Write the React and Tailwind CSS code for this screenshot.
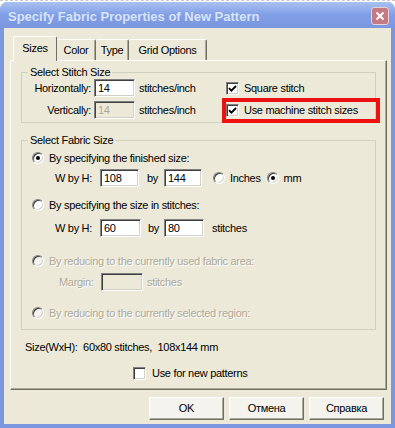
import React from "react";

const Check = ({ checked }) => (
  <span className="flex h-[13px] w-[13px] shrink-0 items-center justify-center border border-t-[#808080] border-l-[#808080] border-b-white border-r-white bg-white shadow-[inset_1px_1px_0_#404040,inset_-1px_-1px_0_#D4D0C8]">
    {checked && (
      <svg width="9" height="9" viewBox="0 0 9 9">
        <path d="M1 4.2 L3.4 6.6 L8 2" fill="none" stroke="#000" strokeWidth="1.9" />
      </svg>
    )}
  </span>
);

const Radio = ({ checked, disabled }) => (
  <span
    className={`flex h-[12px] w-[12px] shrink-0 items-center justify-center rounded-full border border-t-[#808080] border-l-[#808080] border-b-white border-r-white shadow-[inset_1px_1px_0_#404040,inset_-1px_-1px_0_#D4D0C8] ${
      disabled ? "bg-[#F4F3EE]" : "bg-white"
    }`}
  >
    {checked && <span className="h-[4px] w-[4px] rounded-full bg-black" />}
  </span>
);

const Field = ({ value, w, disabled }) => (
  <span
    className={`flex h-[18px] shrink-0 items-center border border-t-[#808080] border-l-[#808080] border-b-white border-r-white pl-[3px] shadow-[inset_1px_1px_0_#404040,inset_-1px_-1px_0_#D4D0C8] ${w} ${
      disabled ? "bg-[#ECE9D8] text-[#ACA899]" : "bg-white"
    }`}
  >
    {value}
  </span>
);

const dim = "text-[#ACA899] [text-shadow:1px_1px_0_#fff]";

const Tab = ({ label, active, w }) =>
  active ? (
    <div
      className={`relative z-10 -mb-px flex h-[25px] items-center justify-center rounded-t-[2px] border-l border-t border-r border-l-white border-t-white border-r-[#716F64] bg-[#ECE9D8] pb-[2px] ${w}`}
    >
      {label}
    </div>
  ) : (
    <div
      className={`flex h-[21px] items-center justify-center rounded-t-[2px] border-t border-r border-t-white border-r-[#716F64] shadow-[inset_-1px_0_0_#ACA899] ${w}`}
    >
      {label}
    </div>
  );

const Button = ({ children }) => (
  <div className="flex h-[23px] w-[75px] items-center justify-center border border-t-white border-l-white border-b-[#716F64] border-r-[#716F64] bg-[#F4F3EE] shadow-[inset_-1px_-1px_0_#ACA899]">
    {children}
  </div>
);

export default function App() {
  return (
    <div className="flex h-[428px] w-[395px] flex-col bg-white font-['Liberation_Sans',Arial,sans-serif] text-[11px] leading-[13px] tracking-[-0.3px] text-black">
      <div className="h-[2px] border-t border-dashed border-[#C8C8C8]" />
      <div className="flex flex-1 flex-col rounded-t-[8px] bg-[#7A96DF]">
        {/* title bar */}
        <div className="flex h-[26px] items-center justify-between rounded-t-[8px] bg-gradient-to-b from-[#A9C1F0] via-[#809EE6] to-[#7A96DF] pl-[8px] pr-[6px]">
          <span className="pt-[2px] text-[13px] font-bold tracking-normal text-[#D8E4F8]">
            Specify Fabric Properties of New Pattern
          </span>
          <span className="mt-[2px] flex h-[18px] w-[18px] items-center justify-center rounded-[3px] border border-[#E6D2DA] bg-[#C57983]">
            <svg width="10" height="10" viewBox="0 0 10 10">
              <path d="M1.5 1.5 L8.5 8.5 M8.5 1.5 L1.5 8.5" stroke="#fff" strokeWidth="2" />
            </svg>
          </span>
        </div>

        {/* client area */}
        <div className="mx-[4px] mb-[4px] flex flex-1 flex-col bg-[#ECE9D8] pt-[8px]">
          <div className="flex items-end pl-[9px]">
            <Tab label="Sizes" active w="w-[44px]" />
            <Tab label="Color" w="w-[39px]" />
            <Tab label="Type" w="w-[33px]" />
            <Tab label="Grid Options" w="w-[78px]" />
          </div>

          <div className="ml-[6px] flex h-[330px] w-[377px] flex-col border-l border-t border-r border-b border-l-white border-t-white border-r-[#716F64] border-b-[#716F64] pl-[10px] pt-[5px] shadow-[inset_-1px_-1px_0_#ACA899]">
            {/* Select Stitch Size */}
            <fieldset className="w-[355px] border border-[#D0D0BF] pb-[3px]">
              <legend className="ml-[6px] px-[2px]">Select Stitch Size</legend>
              <div className="flex h-[18px] items-center">
                <span className="w-[69px] text-right">Horizontally:</span>
                <span className="ml-[3px]">
                  <Field value="14" w="w-[41px]" />
                </span>
                <span className="ml-[4px] w-[83px]">stitches/inch</span>
                <span className="ml-[4px] flex items-center gap-[5px]">
                  <Check checked />
                  <span>Square stitch</span>
                </span>
              </div>
              <div className="mt-[4px] flex h-[18px] items-center">
                <span className="w-[69px] text-right">Vertically:</span>
                <span className="ml-[3px]">
                  <Field value="14" w="w-[41px]" disabled />
                </span>
                <span className="ml-[4px] w-[83px]">stitches/inch</span>
                <span className="relative ml-[4px] flex items-center gap-[5px]">
                  <Check checked />
                  <span>Use machine stitch sizes</span>
                  <span className="absolute -left-[4px] -top-[6px] h-[25px] w-[158px] border-4 border-[#EE1111]" />
                </span>
              </div>
            </fieldset>

            {/* Select Fabric Size */}
            <fieldset className="mt-[11px] w-[355px] border border-[#D0D0BF] pb-[9px]">
              <legend className="ml-[6px] px-[2px]">Select Fabric Size</legend>
              <div className="mt-[4px] flex h-[14px] items-center pl-[10px]">
                <Radio checked />
                <span className="ml-[5px]">By specifying the finished size:</span>
              </div>
              <div className="mt-[4px] flex h-[18px] items-center pl-[33px]">
                <span className="w-[45px]">W by H:</span>
                <Field value="108" w="w-[39px]" />
                <span className="w-[25px] pl-[8px]">by</span>
                <Field value="144" w="w-[38px]" />
                <span className="ml-[11px]">
                  <Radio />
                </span>
                <span className="ml-[5px]">Inches</span>
                <span className="ml-[6px]">
                  <Radio checked />
                </span>
                <span className="ml-[5px]">mm</span>
              </div>

              <div className="mt-[11px] flex h-[14px] items-center pl-[10px]">
                <Radio />
                <span className="ml-[5px]">By specifying the size in stitches:</span>
              </div>
              <div className="mt-[7px] flex h-[18px] items-center pl-[33px]">
                <span className="w-[45px]">W by H:</span>
                <Field value="60" w="w-[41px]" />
                <span className="w-[23px] pl-[7px]">by</span>
                <Field value="80" w="w-[40px]" />
                <span className="ml-[8px]">stitches</span>
              </div>

              <div className="mt-[17px] flex h-[14px] items-center pl-[10px]">
                <Radio disabled />
                <span className={`ml-[5px] ${dim}`}>By reducing to the currently used fabric area:</span>
              </div>
              <div className="mt-[5px] flex h-[18px] items-center pl-[37px]">
                <span className={`w-[42px] ${dim}`}>Margin:</span>
                <Field value="" w="w-[42px]" disabled />
                <span className={`ml-[4px] ${dim}`}>stitches</span>
              </div>

              <div className="mt-[15px] flex h-[14px] items-center pl-[10px]">
                <Radio disabled />
                <span className={`ml-[5px] ${dim}`}>By reducing to the currently selected region:</span>
              </div>
            </fieldset>

            <div className="ml-[4px] mt-[11px]">Size(WxH):&nbsp; 60x80 stitches,&nbsp; 108x144 mm</div>

            <div className="ml-[112px] mt-[13px] flex items-center gap-[6px]">
              <Check />
              <span>Use for new patterns</span>
            </div>
          </div>

          <div className="mt-[7px] flex gap-[5px] pl-[145px]">
            <Button>OK</Button>
            <Button>Отмена</Button>
            <Button>Справка</Button>
          </div>
        </div>
      </div>
    </div>
  );
}
